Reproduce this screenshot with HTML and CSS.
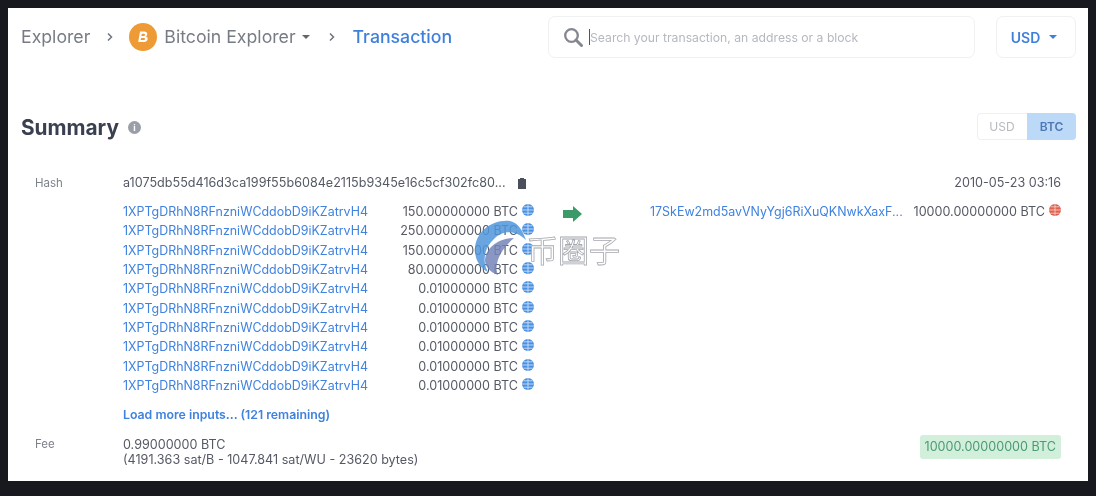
FILE: index.html
```html
<!DOCTYPE html>
<html lang="en">
<head>
    <meta charset="UTF-8">
    <meta name="viewport" content="width=device-width, initial-scale=1.0">
    <title>Bitcoin Explorer - Transaction</title>
    <link rel="stylesheet" href="styles.css">
</head>
<body>
    <div class="page">
        <div class="topbar">
            <div class="crumbs">
                <span>Explorer</span>
                <svg class="chev" viewBox="0 0 8 10"><path d="M2 1.500 5.500 5 2 8.500" fill="none" stroke="#6f7480" stroke-width="1.500"/></svg>
                <svg class="coin" viewBox="0 0 28 28">
                    <circle cx="14" cy="14" r="14" fill="#ee9a35"/>
                    <path d="M11 8.500h4.200c2 0 3.100 1 3.100 2.500 0 1.200-.7 2-1.800 2.300 1.400.3 2.200 1.200 2.200 2.500 0 1.900-1.400 3.200-3.600 3.200H9.200zM12.800 10.700l-.4 2.300h2.300c.8 0 1.300-.4 1.300-1.200 0-.7-.5-1.100-1.300-1.100zM12.100 14.900l-.5 2.200h2.900c.9 0 1.500-.5 1.500-1.200 0-.7-.5-1-1.400-1z" fill="#fff" fill-rule="evenodd"/>
                </svg>
                <span class="crumb-btc">Bitcoin Explorer</span>
                <span class="caret grey"></span>
                <svg class="chev chev-2" viewBox="0 0 8 10"><path d="M2 1.500 5.500 5 2 8.500" fill="none" stroke="#6f7480" stroke-width="1.500"/></svg>
                <span class="crumb-active">Transaction</span>
            </div>
            <div class="search">
                <svg class="search-icon" viewBox="0 0 20 20"><circle cx="8.500" cy="8.500" r="6.300" fill="none" stroke="#83878f" stroke-width="2.300"/><path d="M13 13l5.500 5.500" stroke="#83878f" stroke-width="3" stroke-linecap="round"/></svg>
                <span class="cursor"></span>
                <span class="placeholder">Search your transaction, an address or a block</span>
            </div>
            <div class="currency">USD <span class="caret blue"></span></div>
        </div>

        <div class="summary-head">
            <h2>Summary</h2>
            <span class="info">i</span>
            <div class="toggle">
                <span class="toggle-off">USD</span>
                <span class="toggle-on">BTC</span>
            </div>
        </div>

        <div class="tx">
            <div class="tx-row">
                <div class="label">Hash</div>
                <div class="hash">a1075db55d416d3ca199f55b6084e2115b9345e16c5cf302fc80...</div>
                <svg class="clip" viewBox="0 0 10 12"><path d="M1 2h2V1h4v1h2v10H1z" fill="#4a4f5a"/></svg>
                <div class="date">2010-05-23 03:16</div>
            </div>

            <div class="flow">
                <div class="inputs">
                    <div class="io"><a>1XPTgDRhN8RFnzniWCddobD9iKZatrvH4</a><span>150.00000000 BTC</span><svg class="globe"><use href="#globe"/></svg></div>
                    <div class="io"><a>1XPTgDRhN8RFnzniWCddobD9iKZatrvH4</a><span>250.00000000 BTC</span><svg class="globe"><use href="#globe"/></svg></div>
                    <div class="io"><a>1XPTgDRhN8RFnzniWCddobD9iKZatrvH4</a><span>150.00000000 BTC</span><svg class="globe"><use href="#globe"/></svg></div>
                    <div class="io"><a>1XPTgDRhN8RFnzniWCddobD9iKZatrvH4</a><span>80.00000000 BTC</span><svg class="globe"><use href="#globe"/></svg></div>
                    <div class="io"><a>1XPTgDRhN8RFnzniWCddobD9iKZatrvH4</a><span>0.01000000 BTC</span><svg class="globe"><use href="#globe"/></svg></div>
                    <div class="io"><a>1XPTgDRhN8RFnzniWCddobD9iKZatrvH4</a><span>0.01000000 BTC</span><svg class="globe"><use href="#globe"/></svg></div>
                    <div class="io"><a>1XPTgDRhN8RFnzniWCddobD9iKZatrvH4</a><span>0.01000000 BTC</span><svg class="globe"><use href="#globe"/></svg></div>
                    <div class="io"><a>1XPTgDRhN8RFnzniWCddobD9iKZatrvH4</a><span>0.01000000 BTC</span><svg class="globe"><use href="#globe"/></svg></div>
                    <div class="io"><a>1XPTgDRhN8RFnzniWCddobD9iKZatrvH4</a><span>0.01000000 BTC</span><svg class="globe"><use href="#globe"/></svg></div>
                    <div class="io"><a>1XPTgDRhN8RFnzniWCddobD9iKZatrvH4</a><span>0.01000000 BTC</span><svg class="globe"><use href="#globe"/></svg></div>
                    <a class="load-more">Load more inputs... (121 remaining)</a>
                </div>
                <div class="arrow-col">
                    <svg class="arrow" viewBox="0 0 19 16"><path d="M0 4h10V0l9 8-9 8v-4H0z" fill="#3b9a68"/></svg>
                </div>
                <div class="outputs">
                    <div class="io"><a>17SkEw2md5avVNyYgj6RiXuQKNwkXaxF...</a><span>10000.00000000 BTC</span>
                        <svg class="globe" viewBox="0 0 12 12"><circle cx="6" cy="6" r="6" fill="#e0604f"/><path d="M0 6h12M6 0v12M1.500 2.800h9M1.500 9.200h9" stroke="#f9d8d2" stroke-width=".8"/></svg>
                    </div>
                </div>
            </div>

            <div class="tx-row fee-row">
                <div class="label">Fee</div>
                <div class="fee">0.99000000 BTC<br>(4191.363 sat/B - 1047.841 sat/WU - 23620 bytes)</div>
                <div class="total">10000.00000000 BTC</div>
            </div>
        </div>

        <div class="watermark">
            <svg class="wm-logo" viewBox="0 0 54 56">
                <path d="M36 1C18-1 1 12 1 30c0 10 5 18 13 22-6-10-4-24 6-33 8-8 20-10 32 1C48 9 44 3 36 1z" fill="#4f97dc" fill-opacity=".85"/>
                <path d="M40 18C26 18 12 27 11 40c0 7 5 12 13 15-4-9 0-23 16-37z" fill="#7585b8" fill-opacity=".85"/>
            </svg>
            <span class="wm-text">币圈子</span>
        </div>
    </div>

    <svg class="defs" width="0" height="0">
        <symbol id="globe" viewBox="0 0 12 12">
            <circle cx="6" cy="6" r="6" fill="#4a90e2"/>
            <path d="M0 6h12M6 0v12M1.500 2.800h9M1.500 9.200h9" stroke="#dbe9fa" stroke-width=".8"/>
        </symbol>
    </svg>
</body>
</html>
```

FILE: styles.css
```css
body {
    margin: 0;
    background-color: #17191e;
    font-family: Inter, "Noto Sans CJK SC", sans-serif;
}
.page {
    position: relative;
    width: 1080px;
    height: 473px;
    margin: 8px 8px 15px;
    padding: 8px 12px 0 13px;
    box-sizing: border-box;
    background-color: #fff;
    color: #5c606b;
    overflow: hidden;
    filter: blur(0.7px);
}

/* top bar */
.topbar {
    display: flex;
    align-items: center;
    height: 42px;
}
.crumbs {
    display: flex;
    align-items: center;
    flex: 1;
    font-size: 17.700px;
    color: #777b84;
    margin-top: -1px;
}
.chev {
    width: 8px;
    height: 10px;
    margin: 0 15px 0 16px;
}
.chev-2 {
    margin: 0 17px 0 18px;
}
.coin {
    width: 28px;
    height: 28px;
    margin-right: 7px;
}
.crumb-active {
    color: #3f7fdc;
    font-weight: 500;
}
.caret {
    display: inline-block;
    width: 0;
    height: 0;
    border-left: 4px solid transparent;
    border-right: 4px solid transparent;
    border-top: 4px solid #666;
}
.caret.grey {
    margin-left: 6px;
}
.caret.blue {
    border-top-color: #3f7fdc;
    margin-left: 9px;
}
.search {
    display: flex;
    align-items: center;
    width: 427px;
    height: 42px;
    box-sizing: border-box;
    padding-left: 14px;
    border: 1px solid #f0f1f3;
    border-radius: 7px;
}
.search-icon {
    width: 20px;
    height: 20px;
}
.cursor {
    width: 1px;
    height: 16px;
    margin: 0 0 0 6px;
    background-color: #555;
}
.placeholder {
    font-size: 12.200px;
    color: #b4b8bf;
}
.currency {
    display: flex;
    align-items: center;
    justify-content: center;
    width: 80px;
    height: 42px;
    box-sizing: border-box;
    margin-left: 21px;
    padding-right: 4px;
    border: 1px solid #f0f1f3;
    border-radius: 7px;
    font-size: 14px;
    font-weight: 600;
    color: #3f7fdc;
}

/* summary heading */
.summary-head {
    display: flex;
    align-items: center;
    height: 28px;
    margin-top: 55px;
}
.summary-head h2 {
    margin: 0;
    font-size: 20.800px;
    font-weight: 700;
    color: #3b4050;
}
.info {
    width: 13px;
    height: 13px;
    margin-left: 9px;
    border-radius: 50%;
    background-color: #9a9ea6;
    color: #fff;
    font-size: 9px;
    font-weight: 700;
    line-height: 13px;
    text-align: center;
}
.toggle {
    display: flex;
    margin-left: auto;
    margin-top: -2px;
    height: 27px;
    width: 99px;
    font-size: 12px;
    line-height: 27px;
    text-align: center;
    border-radius: 4px;
    overflow: hidden;
    box-shadow: inset 0 0 0 1px #eff0f2;
}
.toggle-off {
    flex: 1;
    color: #b6b9bf;
}
.toggle-on {
    width: 49px;
    background-color: #bcd9f8;
    color: #4e78b5;
    font-weight: 600;
}

/* transaction */
.tx {
    margin-top: 34px;
    padding: 0 15px 0 14px;
    font-size: 12.600px;
}
.tx-row {
    display: flex;
    align-items: center;
}
.label {
    width: 88px;
    color: #7d818a;
    font-size: 11.500px;
}
.hash {
    color: #555964;
}
.clip {
    width: 10px;
    height: 12px;
    margin-left: 11px;
}
.date {
    margin-left: auto;
    color: #555964;
}
.flow {
    display: flex;
    margin: 12px 0 0 88px;
}
.inputs,
.outputs {
    width: 411px;
}
.arrow-col {
    width: 116px;
    padding-left: 29px;
    box-sizing: border-box;
}
.arrow {
    display: block;
    width: 19px;
    height: 16px;
    margin-top: 4px;
}
.io {
    display: flex;
    align-items: center;
    height: 19.330px;
    white-space: nowrap;
}
.io a {
    color: #3f82e0;
    font-size: 12.450px;
}
.io span {
    margin-left: auto;
    color: #555964;
}
.globe {
    width: 12px;
    height: 12px;
    margin: -3px 0 0 4px;
}
.load-more {
    display: block;
    margin-top: 12px;
    color: #3f82e0;
    font-size: 12.300px;
    font-weight: 600;
}
.fee-row {
    margin-top: 15px;
}
.fee-row .label {
    align-self: flex-start;
}
.fee {
    line-height: 15px;
    color: #555964;
}
.total {
    align-self: flex-start;
    margin-left: auto;
    margin-top: -2px;
    padding: 0 5px;
    height: 24px;
    line-height: 24px;
    border-radius: 3px;
    background-color: #d2efdc;
    color: #4b9a74;
}

/* watermark over the amounts */
.watermark {
    position: absolute;
    left: 466px;
    top: 212px;
    display: flex;
    align-items: center;
}
.wm-logo {
    width: 54px;
    height: 56px;
}
.wm-text {
    margin-left: -1px;
    font-size: 31px;
    font-weight: 400;
    color: #fff;
    -webkit-text-stroke: 0.8px #a5a8ae;
}
.defs {
    position: absolute;
}
```
